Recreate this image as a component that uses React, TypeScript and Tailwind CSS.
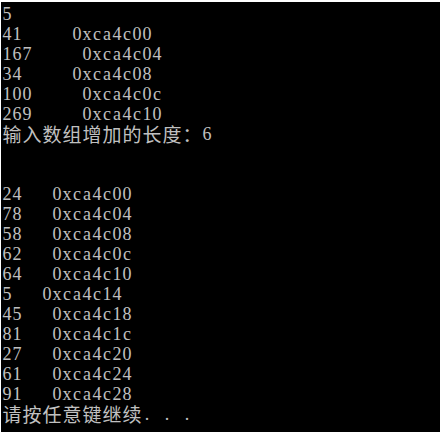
const lines: string[] = [
  "5",
  "41     0xca4c00",
  "167     0xca4c04",
  "34     0xca4c08",
  "100     0xca4c0c",
  "269     0xca4c10",
  "输入数组增加的长度：6",
  "",
  "",
  "24   0xca4c00",
  "78   0xca4c04",
  "58   0xca4c08",
  "62   0xca4c0c",
  "64   0xca4c10",
  "5   0xca4c14",
  "45   0xca4c18",
  "81   0xca4c1c",
  "27   0xca4c20",
  "61   0xca4c24",
  "91   0xca4c28",
  "请按任意键继续. . .",
];

const isWide = (ch: string) => /[\u3000-\u9fff\uff00-\uffef]/.test(ch);

// console cells: half-width chars are 10px, full-width are 20px
const ConsoleLine = ({ text }: { text: string }) => {
  return (
    <div className="flex h-5 leading-5 whitespace-pre">
      {Array.from(text).map((ch, i) =>
        isWide(ch) ? (
          <span key={i} className="w-5 shrink-0 text-center font-['Noto_Sans_CJK_SC',sans-serif] text-[19px]">
            {ch}
          </span>
        ) : (
          <span key={i} className="w-[10px] shrink-0 text-center">
            {ch}
          </span>
        )
      )}
    </div>
  );
};

const App = () => {
  return (
    <div className="w-[440px] h-[432px] bg-black border-t-2 border-l border-white overflow-hidden">
      <div className="pt-[2px] pl-[1px] text-[#c0c0c0] font-['Liberation_Serif',serif] text-[18px]">
        {lines.map((line, i) => (
          <ConsoleLine key={i} text={line} />
        ))}
      </div>
    </div>
  );
};

export default App;
